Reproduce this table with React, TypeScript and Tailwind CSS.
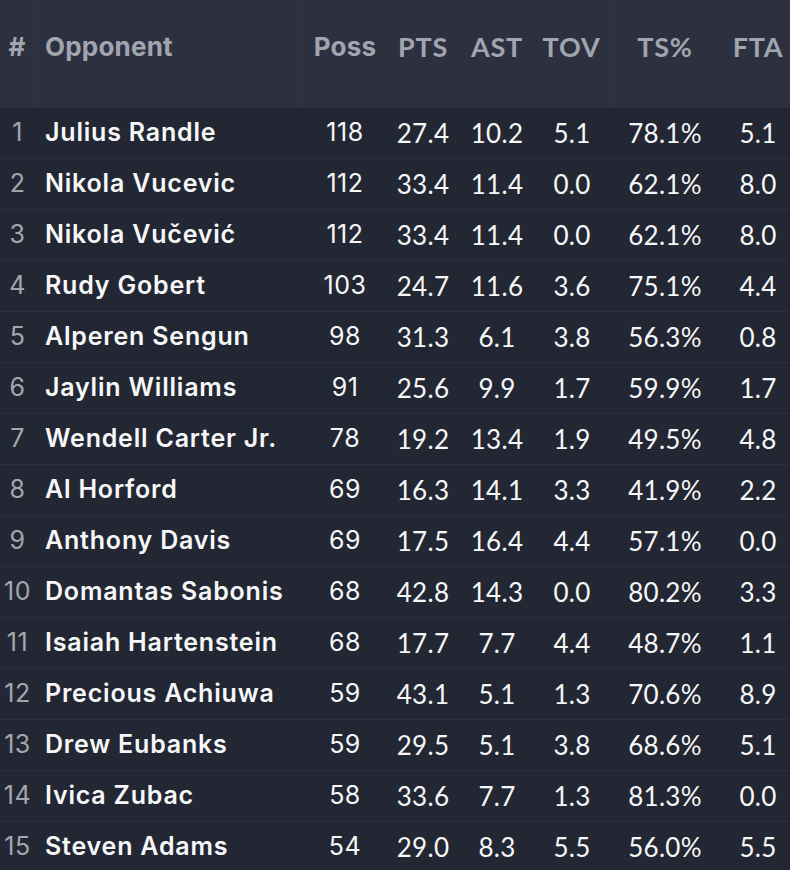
import React from "react";

const rows: [number, string, number, string, string, string, string, string][] = [
  [1, "Julius Randle", 118, "27.4", "10.2", "5.1", "78.1%", "5.1"],
  [2, "Nikola Vucevic", 112, "33.4", "11.4", "0.0", "62.1%", "8.0"],
  [3, "Nikola Vučević", 112, "33.4", "11.4", "0.0", "62.1%", "8.0"],
  [4, "Rudy Gobert", 103, "24.7", "11.6", "3.6", "75.1%", "4.4"],
  [5, "Alperen Sengun", 98, "31.3", "6.1", "3.8", "56.3%", "0.8"],
  [6, "Jaylin Williams", 91, "25.6", "9.9", "1.7", "59.9%", "1.7"],
  [7, "Wendell Carter Jr.", 78, "19.2", "13.4", "1.9", "49.5%", "4.8"],
  [8, "Al Horford", 69, "16.3", "14.1", "3.3", "41.9%", "2.2"],
  [9, "Anthony Davis", 69, "17.5", "16.4", "4.4", "57.1%", "0.0"],
  [10, "Domantas Sabonis", 68, "42.8", "14.3", "0.0", "80.2%", "3.3"],
  [11, "Isaiah Hartenstein", 68, "17.7", "7.7", "4.4", "48.7%", "1.1"],
  [12, "Precious Achiuwa", 59, "43.1", "5.1", "1.3", "70.6%", "8.9"],
  [13, "Drew Eubanks", 59, "29.5", "5.1", "3.8", "68.6%", "5.1"],
  [14, "Ivica Zubac", 58, "33.6", "7.7", "1.3", "81.3%", "0.0"],
  [15, "Steven Adams", 54, "29.0", "8.3", "5.5", "56.0%", "5.5"],
];

const grid =
  "grid grid-cols-[40px_263px_84px_72px_76px_74px_112px_69px]";

export default function App() {
  return (
    <div className="w-[790px] h-[870px] overflow-hidden bg-[#232734] font-['Inter',sans-serif]">
      <div className={`${grid} h-[108px] bg-[#2d313f] text-[#a1a5b0]`}>
        <div className="border-r border-[#30343f] pt-[31px] pr-[5px] text-center text-[26px] leading-[32px] font-bold">
          #
        </div>
        <div className="border-r border-[#30343f] pt-[31px] pl-[5px] text-[26px] leading-[32px] font-bold tracking-[0.2px]">
          Opponent
        </div>
        <div className="pt-[31px] text-center text-[26px] leading-[32px] font-bold tracking-[0.2px]">
          Poss
        </div>
        <div className="pt-[31px] text-center text-[27px] leading-[32px] font-bold tracking-[0.8px] font-['Lato',sans-serif]">
          PTS
        </div>
        <div className="pt-[31px] text-center text-[27px] leading-[32px] font-bold tracking-[0.8px] font-['Lato',sans-serif]">
          AST
        </div>
        <div className="border-r border-[#30343f] pt-[31px] text-center text-[27px] leading-[32px] font-bold tracking-[0.8px] font-['Lato',sans-serif]">
          TOV
        </div>
        <div className="pt-[31px] text-center text-[27px] leading-[32px] font-bold tracking-[0.8px] font-['Lato',sans-serif]">
          TS%
        </div>
        <div className="pt-[31px] pl-[5px] text-center text-[27px] leading-[32px] font-bold tracking-[0.8px] font-['Lato',sans-serif]">
          FTA
        </div>
      </div>
      {rows.map((r) => (
        <div
          key={r[0]}
          className={`${grid} h-[51px] items-center border-b border-[#2c303d] text-[#f7f7f8]`}
        >
          <div className="pr-[5px] text-center text-[25px] tracking-[0.5px] text-[#a3a6af]">
            {r[0]}
          </div>
          <div className="pl-[5px] text-[25px] font-semibold tracking-[0.8px] whitespace-nowrap">
            {r[1]}
          </div>
          <div className="text-center text-[25px] tracking-[0.5px]">{r[2]}</div>
          <div className="text-center text-[26px] tracking-[0.3px] font-['Lato',sans-serif]">
            {r[3]}
          </div>
          <div className="text-center text-[26px] tracking-[0.3px] font-['Lato',sans-serif]">
            {r[4]}
          </div>
          <div className="text-center text-[26px] tracking-[0.3px] font-['Lato',sans-serif]">
            {r[5]}
          </div>
          <div className="text-center text-[26px] tracking-[0.3px] font-['Lato',sans-serif]">
            {r[6]}
          </div>
          <div className="pl-[5px] text-center text-[26px] tracking-[0.3px] font-['Lato',sans-serif]">
            {r[7]}
          </div>
        </div>
      ))}
    </div>
  );
}
